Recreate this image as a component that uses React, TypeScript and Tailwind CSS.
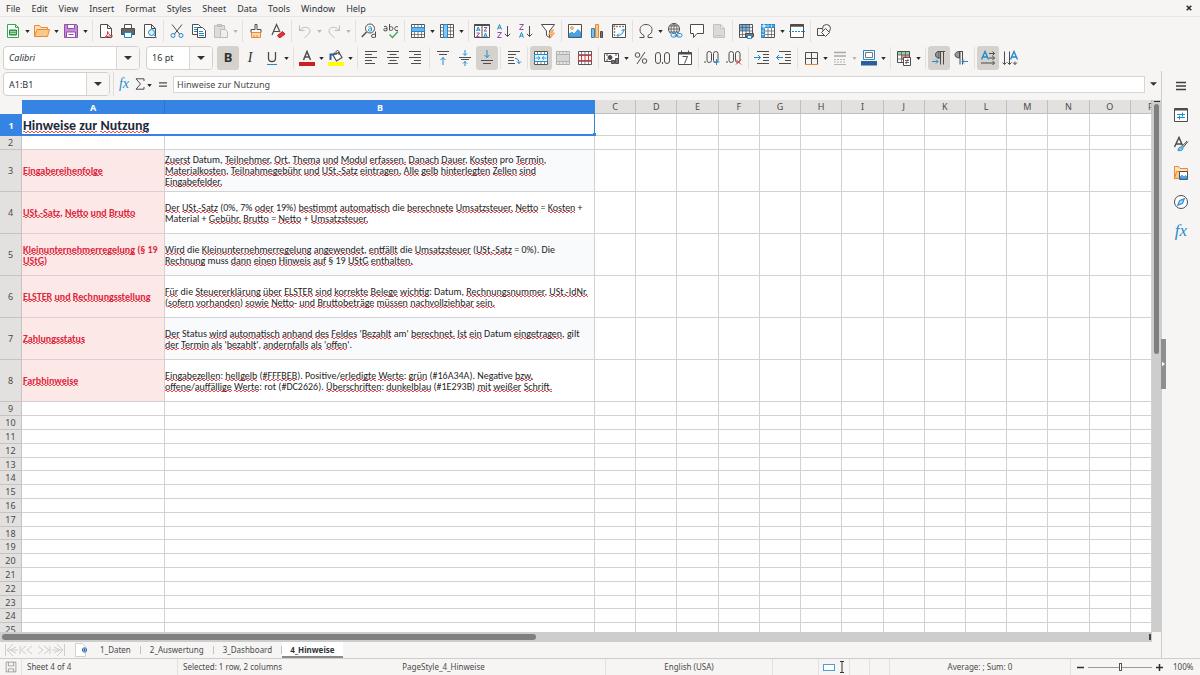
import type { ReactNode } from "react";
import clsx from "clsx";

const INK = "#4d4d4d";
const BLUE = "#1e8bcd";
const ORANGE = "#ed8733";

const menus = ["File", "Edit", "View", "Insert", "Format", "Styles", "Sheet", "Data", "Tools", "Window", "Help"];
const columns = ["C", "D", "E", "F", "G", "H", "I", "J", "K", "L", "M", "N", "O", "P"];
const tabs = ["1_Daten", "2_Auswertung", "3_Dashboard", "4_Hinweise"];

const notes = [
  {
    title: ["Eingabereihenfolge"],
    text: [
      "Zuerst Datum, Teilnehmer, Ort, Thema und Modul erfassen. Danach Dauer, Kosten pro Termin,",
      "Materialkosten, Teilnahmegebühr und USt.-Satz eintragen. Alle gelb hinterlegten Zellen sind",
      "Eingabefelder.",
    ],
  },
  {
    title: ["USt.-Satz, Netto und Brutto"],
    text: [
      "Der USt.-Satz (0%, 7% oder 19%) bestimmt automatisch die berechnete Umsatzsteuer. Netto = Kosten +",
      "Material + Gebühr. Brutto = Netto + Umsatzsteuer.",
    ],
  },
  {
    title: ["Kleinunternehmerregelung (§ 19", "UStG)"],
    text: [
      "Wird die Kleinunternehmerregelung angewendet, entfällt die Umsatzsteuer (USt.-Satz = 0%). Die",
      "Rechnung muss dann einen Hinweis auf § 19 UStG enthalten.",
    ],
  },
  {
    title: ["ELSTER und Rechnungsstellung"],
    text: [
      "Für die Steuererklärung über ELSTER sind korrekte Belege wichtig: Datum, Rechnungsnummer, USt.-IdNr.",
      "(sofern vorhanden) sowie Netto- und Bruttobeträge müssen nachvollziehbar sein.",
    ],
  },
  {
    title: ["Zahlungsstatus"],
    text: [
      "Der Status wird automatisch anhand des Feldes 'Bezahlt am' berechnet. Ist ein Datum eingetragen, gilt",
      "der Termin als 'bezahlt', andernfalls als 'offen'.",
    ],
  },
  {
    title: ["Farbhinweise"],
    text: [
      "Eingabezellen: hellgelb (#FFFBEB). Positive/erledigte Werte: grün (#16A34A). Negative bzw.",
      "offene/auffällige Werte: rot (#DC2626). Überschriften: dunkelblau (#1E293B) mit weißer Schrift.",
    ],
  },
];

const emptyRows = Array.from({ length: 17 }, (_, i) => i + 9);

// words the English dictionary accepts
const known = ["Datum", "pro", "die", "Die", "Material", "muss", "Status", "am", "Positive", "Negative", "rot", "gilt"];

function Spelled({ text }: { text: string }) {
  return (
    <>
      {text.split(/(#?[\p{L}\d]+(?:\.-\p{L}+)?\.?)/u).map((part, i) => {
        const word = part.replace(/\.$/, "");
        if (i % 2 === 0 || known.includes(word) || /\d/.test(word)) return part;
        return (
          <span
            key={i}
            className="bg-[conic-gradient(#0000_25%,#ea4a50_0_50%,#0000_0_75%,#ea4a50_0)] bg-[length:4px_2px] bg-[position:0_calc(100%-1px)] bg-repeat-x"
          >
            {part}
          </span>
        );
      })}
    </>
  );
}

function Lines({ lines }: { lines: string[] }) {
  return (
    <>
      {lines.map((line) => (
        <div key={line}>
          <Spelled text={line} />
        </div>
      ))}
    </>
  );
}

function Svg({ children, className = "size-4" }: { children: ReactNode; className?: string }) {
  return (
    <svg viewBox="0 0 16 16" className={className} fill="none" stroke={INK} strokeWidth="1" aria-hidden="true">
      {children}
    </svg>
  );
}

function Caret({ className = "text-[#2a2a2a]" }: { className?: string }) {
  return (
    <svg viewBox="0 0 6 4" className={clsx("h-[3px] w-[5px]", className)} aria-hidden="true">
      <path d="M0 0h6L3 4z" fill="currentColor" />
    </svg>
  );
}

function Tool({ label, active, children }: { label: string; active?: boolean; children: ReactNode }) {
  return (
    <button
      type="button"
      aria-label={label}
      className={clsx("flex h-6 w-[22px] shrink-0 items-center justify-center rounded-[3px]", active && "bg-[#d5d1cd]")}
    >
      {children}
    </button>
  );
}

function More({ label, off }: { label: string; off?: boolean }) {
  return (
    <button type="button" aria-label={label} className="flex h-6 w-[7px] shrink-0 items-center justify-center pt-0.5">
      <Caret className={off ? "text-[#b5b5b5]" : "text-[#2a2a2a]"} />
    </button>
  );
}

function Sep({ wide }: { wide?: boolean }) {
  return (
    <div className={clsx("flex h-[22px] shrink-0 justify-center", wide ? "w-1.5" : "w-[5px]")}>
      <div className="w-px bg-[#e3e1df]" />
    </div>
  );
}

function Doc({ stroke = INK, fill = "#fff" }: { stroke?: string; fill?: string }) {
  return <path d="M2.500 1.500h7l4 4v9h-11zM9.500 1.500v4h4" stroke={stroke} fill={fill} />;
}

// a 4 by 4 cell table, the base of every row, column and merge icon
function Lattice({ stroke = "#555", fill = "none" }: { stroke?: string; fill?: string }) {
  return (
    <>
      <path d="M1.500 1.500h13v13h-13z" stroke={stroke} fill={fill} />
      <path d="M1.500 4.500h13M1.500 8h13M1.500 11.500h13M4.500 1.500v13M8 1.500v13M11.500 1.500v13" stroke={stroke} strokeWidth=".7" />
    </>
  );
}

function AlignLines({ d }: { d: string }) {
  return (
    <Svg>
      <path d={d} />
    </Svg>
  );
}

function StandardBar() {
  return (
    <div role="toolbar" aria-label="Standard" className="flex h-[27px] items-center overflow-hidden pl-0.5">
      <Tool label="New">
        <Svg>
          <path d="M2.500 1.500h8l3 3v10h-11z" fill="#fff" stroke="#3aa655" />
          <path d="M10.500 1.500v3h3" stroke="#3aa655" />
          <path d="M4.500 7h7v5h-7z" fill="#3aa655" stroke="#2d8b45" />
          <path d="M5 8.700h6M5 10.500h6" stroke="#fff" strokeWidth=".6" />
        </Svg>
      </Tool>
      <More label="Templates" />
      <Tool label="Open">
        <Svg>
          <path d="M.5 13.500v-11h5l1.500 2h6.500v2" fill="#fde3c0" stroke={ORANGE} />
          <path d="M3 6.500h12.500l-2 7H.5z" fill="#f9c98a" stroke={ORANGE} />
        </Svg>
      </Tool>
      <More label="Recent files" />
      <Tool label="Save">
        <Svg>
          <path d="M1.500 1.500h12l1 1v12h-13z" fill="#c58cd6" stroke="#924ea8" />
          <path d="M4.500 1.500h7v4h-7zM3.500 9h9v5.500h-9z" fill="#fff" stroke="#924ea8" />
          <path d="M5.500 11.500h5" stroke="#924ea8" />
        </Svg>
      </Tool>
      <More label="Save options" />
      <Sep wide />
      <Tool label="Export as PDF">
        <Svg>
          <Doc />
          <path d="M7 14.500c2-2 3-4 2.600-6 1 3 2.800 4.500 5 4.500-3-.5-5.500.5-7.600 1.500z" stroke="#e0323c" />
        </Svg>
      </Tool>
      <Tool label="Print">
        <Svg>
          <path d="M4.500 5.500v-4h7v4" fill="#fff" />
          <path d="M1.500 5.500h13v6h-13z" fill="#666" />
          <path d="M4.500 9.500h7v5h-7z" fill="#fff" stroke={BLUE} />
        </Svg>
      </Tool>
      <Tool label="Print preview">
        <Svg>
          <Doc />
          <circle cx="9.500" cy="9.500" r="3" fill="#d7ecfa" stroke={BLUE} />
          <path d="M11.700 11.700l3 3" stroke={BLUE} />
        </Svg>
      </Tool>
      <Sep />
      <Tool label="Cut">
        <Svg>
          <path d="M3 1.500l7.500 9.500M13 1.500L5.500 11" />
          <circle cx="4" cy="12.500" r="2" stroke={BLUE} />
          <circle cx="12" cy="12.500" r="2" stroke={BLUE} />
        </Svg>
      </Tool>
      <Tool label="Copy">
        <Svg>
          <path d="M1.500 1.500h6l2 2v8h-8z" fill="#fff" />
          <path d="M3 4.500h3M3 6.500h3M3 8.500h3" stroke={BLUE} />
          <path d="M6.500 4.500h5l3 3v7h-8z" fill="#fff" />
          <path d="M8 8.500h4M8 10.500h5M8 12.500h5" stroke={BLUE} />
        </Svg>
      </Tool>
      <Tool label="Paste">
        <Svg>
          <path d="M1.500 2.500h10v12h-10z" fill="#dcdcdc" stroke="#bdbdbd" />
          <path d="M4.500 1.500h4v2h-4z" fill="#c9c9c9" stroke="#bdbdbd" />
          <path d="M7.500 6.500h5l2 2v6h-7z" fill="#eee" stroke="#bdbdbd" />
        </Svg>
      </Tool>
      <More label="Paste options" off />
      <Sep wide />
      <Tool label="Clone formatting">
        <Svg>
          <path d="M7 1.500h2v5h4v3H3v-3h4z" />
          <path d="M3.500 9.500h9v5h-9z" fill="#fbdcb4" stroke={ORANGE} />
          <path d="M6 12v2M9 12v2" stroke={ORANGE} />
        </Svg>
      </Tool>
      <Tool label="Clear direct formatting">
        <Svg>
          <path d="M2 12L6.500 1.500 10 9M3.500 8.500h5.500" strokeWidth="1.200" />
          <path d="M7.500 12.500l5-4 2.500 2.500-4.500 3.500H9z" fill="#e0323c" stroke="#c9202b" />
        </Svg>
      </Tool>
      <Sep />
      <Tool label="Undo">
        <Svg>
          <path d="M2.500 2.500v5h5M2.800 7.300C6 3 13 3.500 13 8c0 3-3 4.500-5.500 6.500" stroke="#bdbdbd" />
        </Svg>
      </Tool>
      <More label="Undo steps" off />
      <Tool label="Redo">
        <Svg>
          <path d="M13.500 2.500v5h-5M13.200 7.300C10 3 3 3.500 3 8c0 3 3 4.500 5.500 6.500" stroke="#bdbdbd" />
        </Svg>
      </Tool>
      <More label="Redo steps" off />
      <Sep wide />
      <Tool label="Find and replace">
        <Svg>
          <circle cx="9" cy="5.500" r="4.500" fill="#fff" />
          <path d="M5.500 9L.8 14" strokeWidth="1.400" />
          <path d="M7.300 4.200c1.200-1 3.200-.6 3.200 1v2.500c-1.200.7-3.200.6-3.200-.7s1.700-1.300 3.200-1.200" stroke={BLUE} />
          <path d="M14.500 8.500v6M14.500 12c-1-1.300-4-1-4 1 0 2 3 2 4 .5" />
        </Svg>
      </Tool>
      <Tool label="Spelling">
        <Svg>
          <path d="M1 3.700c1.300-.8 3-.5 3 .9V7.500c-1.200.7-3.300.6-3.300-.8 0-1 1.300-1.300 3.300-1.200M6.500 1v6.500M6.500 4.500c1-1.300 3.500-1 3.500 1s-2.500 2.500-3.500 1M15 4c-1.200-.9-3.300-.4-3.300 1.600S13.800 8 15 7.200" />
          <path d="M6.500 11.500l3 3 5.500-6" stroke="#3aa655" strokeWidth="1.300" />
        </Svg>
      </Tool>
      <Sep />
      <Tool label="Row">
        <Svg>
          <Lattice fill="#fff" />
          <path d="M1.500 4.500h13v4h-13z" fill="#6cb2ec" stroke={BLUE} />
        </Svg>
      </Tool>
      <More label="Row options" />
      <Tool label="Column">
        <Svg>
          <Lattice fill="#fff" />
          <path d="M4.500 1.500h4v13h-4z" fill="#8cc4f0" stroke={BLUE} />
        </Svg>
      </Tool>
      <More label="Column options" />
      <Sep wide />
      <Tool label="Sort">
        <Svg>
          <path d="M.5 1.500h15v13H.5zM8 1.500v13" fill="#fff" />
          <path d="M.5 2h15" strokeWidth="2" />
          <path d="M2.500 8l1.700-4L6 8M3 7h2.500M9.800 14l1.700-4 1.700 4M10.300 13h2.500" stroke={BLUE} />
          <path d="M2.500 10h3l-3 3.700h3M10 4.500h3L10 8h3" stroke="#924ea8" />
        </Svg>
      </Tool>
      <Tool label="Sort ascending">
        <Svg>
          <path d="M1.500 6.500l2-5 2 5M2 5h3" stroke={BLUE} />
          <path d="M1.500 9.500h4l-4 5h4" stroke="#924ea8" />
          <path d="M11.500 3v10.500M8.800 10.800l2.700 2.700 2.700-2.700" />
        </Svg>
      </Tool>
      <Tool label="Sort descending">
        <Svg>
          <path d="M1.500 1.500h4l-4 5h4" stroke="#924ea8" />
          <path d="M1.500 14.500l2-5 2 5M2 13h3" stroke={BLUE} />
          <path d="M11.500 3v10.500M8.800 10.800l2.700 2.700 2.700-2.700" />
        </Svg>
      </Tool>
      <Tool label="AutoFilter">
        <Svg>
          <path d="M1.500 1.500h13L9.500 8v6.500l-3-2V8z" fill="#fff" />
          <path d="M11.500 7l-3 4.500h3l-1.500 4 4.500-5.500h-3l2-3z" fill="#f9c98a" stroke={ORANGE} strokeWidth=".7" />
        </Svg>
      </Tool>
      <Sep />
      <Tool label="Insert image">
        <Svg>
          <path d="M1.500 1.500h13v13h-13z" fill="#fff" />
          <circle cx="5" cy="5" r="1.500" fill="#f9c98a" stroke={ORANGE} strokeWidth=".7" />
          <path d="M2 14v-3l3-2 2 2 4-4.500 3 3V14z" fill="#4fa3e0" stroke={BLUE} strokeWidth=".7" />
        </Svg>
      </Tool>
      <Tool label="Insert chart">
        <Svg>
          <path d="M2.500 5.500h3v9h-3z" fill="#83beec" stroke={BLUE} />
          <path d="M6.500 1.500h3v13h-3z" fill="#f9c98a" stroke={ORANGE} />
          <path d="M11.500 8.500h2v6h-2z" fill="#777" />
        </Svg>
      </Tool>
      <Tool label="Insert pivot table">
        <Svg>
          <path d="M1.500 1.500h13v13h-13z" fill="#fff" />
          <path d="M2 3.500h12M3.500 2v12" strokeDasharray="2 1" strokeWidth="1.500" stroke="#8a8a8a" />
          <path d="M6 12.500c4 0 6.500-2 6.500-6M8 10.500l-2 2 2 2M10.500 8l2-2 2 2" stroke={BLUE} />
        </Svg>
      </Tool>
      <Sep />
      <Tool label="Special character">
        <Svg>
          <path d="M1.500 14.500H6v-2C3 11 2 9 2 6.800 2 3.500 4.700 1.500 8 1.500s6 2 6 5.300c0 2.200-1 4.200-4 5.700v2h4.500" />
        </Svg>
      </Tool>
      <More label="Characters" />
      <Tool label="Hyperlink">
        <Svg>
          <circle cx="7" cy="6" r="5.500" />
          <path d="M7 .5v11M1.500 6h11M2.500 3h9M2.500 9h9M7 .5c-4 3-4 8 0 11M7 .5c4 3 4 8 0 11" strokeWidth=".8" />
          <path d="M4 10h11v5H4z" fill="#f6f5f4" stroke="none" />
          <rect x="4" y="10.500" width="5.500" height="3.500" rx="1.700" stroke={BLUE} />
          <rect x="9.500" y="10.500" width="5.500" height="3.500" rx="1.700" stroke={BLUE} />
          <path d="M7.500 12.300h4" stroke={BLUE} />
        </Svg>
      </Tool>
      <Tool label="Comment">
        <Svg>
          <path d="M1.500 1.500h13v9H8l-3.500 4v-4h-3z" fill="#fff" />
        </Svg>
      </Tool>
      <Tool label="Headers and footers">
        <Svg>
          <Doc stroke="#c2c2c2" fill="#dadada" />
          <path d="M4.500 12.500h7" stroke="#c2c2c2" />
        </Svg>
      </Tool>
      <Sep />
      <Tool label="Print area">
        <Svg>
          <path d="M1 1.500h10.500V8H1z" fill="#6cb2ec" stroke="none" />
          <Lattice />
          <path d="M7.500 10.500h8v3h-8z" fill="#777" />
          <path d="M9.500 12.500h4v3h-4z" fill="#fff" stroke={BLUE} />
        </Svg>
      </Tool>
      <Tool label="Freeze rows and columns">
        <Svg>
          <Lattice fill="#fff" />
          <path d="M1.500 1.500h13v3h-10v10h-3z" fill="#4fa3e0" stroke={BLUE} />
          <path d="M8 1.500v3M11.500 1.500v3M1.500 8h3M1.500 11.500h3" stroke="#fff" strokeWidth=".6" />
          <path d="M4 .5v5M1.500 3h5" stroke="#fff" />
        </Svg>
      </Tool>
      <More label="Freeze options" />
      <Tool label="Split window">
        <Svg>
          <path d="M1.500 1.500h13v13h-13z" fill="#fff" />
          <path d="M1.500 2.500h13" strokeWidth="2.500" />
          <path d="M0 8.500h16" stroke={BLUE} strokeDasharray="2 1" />
        </Svg>
      </Tool>
      <Sep />
      <Tool label="Show draw functions">
        <Svg>
          <path d="M1.500 5.500h8v7h-8z" />
          <circle cx="10.500" cy="5.500" r="4" fill="#f6f5f4" />
          <path d="M5.500 9.500l4-4 4 4-4 4z" fill="#f6f5f4" />
        </Svg>
      </Tool>
    </div>
  );
}

function Combo({ label, value, italic, wide }: { label: string; value: string; italic?: boolean; wide: string }) {
  return (
    <div className={clsx("flex h-6 shrink-0 overflow-hidden rounded-[4px] border border-[#d3cfcb] bg-white", wide)}>
      <input
        aria-label={label}
        defaultValue={value}
        className={clsx("min-w-0 flex-1 bg-transparent pl-[5px] outline-none", italic && "italic")}
      />
      <button
        type="button"
        aria-label={label + " list"}
        className="flex w-[23px] items-center justify-center border-l border-[#d9d6d3] bg-[#f8f7f6]"
      >
        <svg viewBox="0 0 8 4" className="h-1 w-2" aria-hidden="true">
          <path d="M0 0h8L4 4z" fill="#2e3436" />
        </svg>
      </button>
    </div>
  );
}

function FormattingBar() {
  return (
    <div role="toolbar" aria-label="Formatting" className="flex h-[27px] items-center overflow-hidden pl-[3px]">
      <Combo label="Font name" value="Calibri" italic wide="w-[137px]" />
      <div className="w-1.5 shrink-0" />
      <Combo label="Font size" value="16 pt" wide="w-[67px]" />
      <div className="w-1 shrink-0" />
      <Tool label="Bold" active>
        <span className="text-[13px] leading-none font-bold">B</span>
      </Tool>
      <Tool label="Italic">
        <span className="font-['Liberation_Serif',serif] text-[14px] leading-none italic">I</span>
      </Tool>
      <Tool label="Underline">
        <Svg>
          <path d="M4.500 2v6.500c0 4 7 4 7 0V2" strokeWidth="1.300" />
          <path d="M3 14.500h10" stroke={BLUE} />
        </Svg>
      </Tool>
      <More label="Underline style" />
      <Sep wide />
      <Tool label="Font color">
        <Svg>
          <path d="M4.500 10L8 1.500 11.500 10M5.800 7h4.500" strokeWidth="1.500" />
          <path d="M0 12h16v4H0z" fill="#c9211e" stroke="none" />
        </Svg>
      </Tool>
      <More label="Font colors" />
      <Tool label="Highlighting">
        <Svg>
          <path d="M5 5l6-2.500 3 5L8.500 11z" fill="#fff" strokeWidth="1.200" />
          <path d="M8 5V2c0-2 3-2 3 0v3" />
          <path d="M2.500 10V4.500h3L7 3" stroke="#2a6099" strokeWidth="2" />
          <path d="M0 12h16v4H0z" fill="#ff0" stroke="none" />
        </Svg>
      </Tool>
      <More label="Highlight colors" />
      <Sep wide />
      <Tool label="Align left">
        <AlignLines d="M2 1.500h12M2 4.500h7M2 7.500h12M2 10.500h7M2 13.500h10" />
      </Tool>
      <Tool label="Center horizontally">
        <AlignLines d="M2 1.500h12M4.500 4.500h7M2 7.500h12M4.500 10.500h7M3 13.500h10" />
      </Tool>
      <Tool label="Align right">
        <AlignLines d="M2 1.500h12M7 4.500h7M2 7.500h12M7 10.500h7M4 13.500h10" />
      </Tool>
      <Sep wide />
      <Tool label="Align top">
        <Svg>
          <path d="M2 1.500h12M4 4.500h8" />
          <path d="M8 15V7.500M5.500 10L8 7.500l2.500 2.500" stroke={BLUE} />
        </Svg>
      </Tool>
      <Tool label="Center vertically">
        <Svg>
          <path d="M2 7.500h12M4 9.500h8" />
          <path d="M8 0v5M6 3.500l2 2 2-2M8 16v-4.500M6 13.500l2-2 2 2" stroke={BLUE} />
        </Svg>
      </Tool>
      <Tool label="Align bottom" active>
        <Svg>
          <path d="M2 10.500h12M4 13.500h8" />
          <path d="M8 0v7.500M5.500 5L8 7.500 10.500 5" stroke={BLUE} />
        </Svg>
      </Tool>
      <Sep />
      <Tool label="Wrap text">
        <Svg>
          <path d="M2 1.500h12M2 4.500h8M2 7.500h6M2 10.500h6M2 13.500h7" />
          <path d="M9 8.500c3 0 4 1.500 4 5M11 11.500l2 2 2-2" stroke={BLUE} />
        </Svg>
      </Tool>
      <Sep />
      <Tool label="Merge and center" active>
        <Svg>
          <Lattice fill="#fff" />
          <path d="M1.500 4.500h13v7h-13z" fill="#e8f4fd" stroke={BLUE} />
          <path d="M2.500 8H7M9 8h4.500M5 6.200L7 8 5 9.800M11 6.200L9 8l2 1.800" stroke={BLUE} strokeWidth=".8" />
        </Svg>
      </Tool>
      <Tool label="Merge cells">
        <Svg>
          <Lattice stroke="#b0b0b0" fill="#e4e4e4" />
          <path d="M1.500 4.500h13v7h-13z" fill="#d6d6d6" stroke="#b0b0b0" />
        </Svg>
      </Tool>
      <Tool label="Unmerge cells">
        <Svg>
          <Lattice fill="#fff" />
          <path d="M1.500 5.500h13v5h-13zM4.500 5.500v5M8 5.500v5M11.500 5.500v5" fill="#fff" stroke="#e0323c" />
        </Svg>
      </Tool>
      <Sep />
      <Tool label="Format as currency">
        <Svg>
          <path d="M.5 3.500h14v8H.5z" fill="#fff" />
          <circle cx="6" cy="7.500" r="2" fill={INK} />
          <path d="M2 5h2M11 5h2M2 10h2" />
          <path d="M7.500 10.500h3v3h-3zM11.500 8.500h3v5h-3z" fill="#777" />
        </Svg>
      </Tool>
      <More label="Currencies" />
      <Tool label="Format as percent">
        <Svg>
          <circle cx="4.500" cy="5" r="2.300" />
          <circle cx="11.500" cy="11" r="2.300" />
          <path d="M12 2L4 14" />
        </Svg>
      </Tool>
      <Tool label="Format as number">
        <Svg>
          <rect x=".5" y="2.500" width="5" height="11" rx="2.500" />
          <rect x="9.500" y="2.500" width="5" height="11" rx="2.500" />
          <path d="M7.500 12v2" />
        </Svg>
      </Tool>
      <Tool label="Format as date">
        <Svg>
          <path d="M1.500 2.500h13v12h-13z" fill="#fff" />
          <path d="M1.500 3.500h13" strokeWidth="2" />
          <path d="M4.500 .5v3M11.500 .5v3M5.500 6.500h5l-3 7" />
        </Svg>
      </Tool>
      <Sep />
      <Tool label="Add decimal place">
        <Svg>
          <rect x="3" y="1.500" width="4.500" height="11" rx="2.200" />
          <rect x="9.500" y="1.500" width="4.500" height="11" rx="2.200" />
          <path d="M1 11v2" />
          <path d="M12.500 9v6M9.500 12h6" stroke={BLUE} />
        </Svg>
      </Tool>
      <Tool label="Delete decimal place">
        <Svg>
          <rect x="3" y="1.500" width="4.500" height="11" rx="2.200" />
          <rect x="9.500" y="1.500" width="4.500" height="11" rx="2.200" />
          <path d="M1 11v2" />
          <path d="M10 9.500l5 5M15 9.500l-5 5" stroke="#e0323c" />
        </Svg>
      </Tool>
      <Sep wide />
      <Tool label="Increase indent">
        <Svg>
          <path d="M3 1.500h12M9 4.500h6M9 7.500h6M9 10.500h6M3 13.500h12" />
          <path d="M0 7.500h6.500M4 5l2.500 2.500L4 10" stroke={BLUE} />
        </Svg>
      </Tool>
      <Tool label="Decrease indent">
        <Svg>
          <path d="M3 1.500h12M9 4.500h6M9 7.500h6M9 10.500h6M3 13.500h12" />
          <path d="M.5 7.500H7M3 5L.5 7.500 3 10" stroke={BLUE} />
        </Svg>
      </Tool>
      <Sep />
      <Tool label="Borders">
        <Svg>
          <path d="M2.500 14V2.500h12V14M8.500 2.500v12M2.500 8.500h12" />
          <path d="M2 14.500h13" stroke={ORANGE} />
        </Svg>
      </Tool>
      <More label="Border options" />
      <Tool label="Border style">
        <Svg>
          <path d="M2 2.500h12M2 6h12" stroke="#a8a8a8" strokeWidth="1.500" />
          <path d="M2 9.500h12M2 12h12" stroke="#b5b5b5" strokeDasharray="2 1" />
          <path d="M2 14.500h12" stroke="#b5b5b5" />
        </Svg>
      </Tool>
      <More label="Border styles" off />
      <Tool label="Border color">
        <Svg>
          <path d="M2.500 .500h11v9h-11z" fill="#fff" stroke={BLUE} />
          <path d="M4.500 2.500h7v5h-7z" stroke="#777" />
          <path d="M0 11h16v4.500H0z" fill="#2a6099" stroke="none" />
        </Svg>
      </Tool>
      <More label="Border colors" />
      <Sep wide />
      <Tool label="Conditional formatting">
        <Svg>
          <path d="M1.500 1.500h12v11h-12z" fill="#fff" stroke="none" />
          <path d="M1.500 1.500h12v3.500h-12z" fill="#8ed59f" stroke="none" />
          <path d="M5.500 5h8v5h-8z" fill="#f58f8f" stroke="none" />
          <path d="M1.500 1.500h12v11h-12z" />
          <path d="M1.500 5h12M1.500 9h12M5.500 1.500v11M9.500 1.500v11" strokeWidth=".7" />
          <path d="M7.500 7.500h7v8h-7z" fill="#fff" />
          <path d="M9 10.500h4M9 12.500h4M12 9l-2 5" strokeWidth=".8" />
        </Svg>
      </Tool>
      <More label="Conditions" />
      <Sep wide />
      <Tool label="Left-to-right" active>
        <Svg>
          <path d="M14 1.500H8C3.500 1.500 3.500 8 8 8h1.500M9.500 1.500v13M12.500 1.500v13" />
          <path d="M8 1.500C3.500 1.500 3.500 8 8 8z" fill="#999" />
          <path d="M1 11.500h6M5 9.500l2 2-2 2" stroke={BLUE} />
        </Svg>
      </Tool>
      <Tool label="Right-to-left">
        <Svg>
          <path d="M10 1.500H6M7 1.500v13M9.500 1.500v13" />
          <path d="M6.500 1.500C.5 1.500.5 8 6.500 8z" fill="#999" />
          <path d="M15 11.500H9M11 9.500l-2 2 2 2" stroke={BLUE} />
        </Svg>
      </Tool>
      <Sep />
      <Tool label="Text direction from left to right" active>
        <Svg>
          <path d="M1.500 9.500l3.500-8 3.500 8M3 7h4.500" stroke={BLUE} strokeWidth="1.400" />
          <path d="M9 3.500h5.500M9 8h5.500M1 13h13.500M12.500 1.500l2 2-2 2M12.500 6l2 2-2 2M12.500 11l2 2-2 2" />
        </Svg>
      </Tool>
      <Tool label="Text direction from top to bottom">
        <Svg>
          <path d="M8.500 9.500L12 1.500l3.500 8M10 7h4.500" stroke={BLUE} strokeWidth="1.400" />
          <path d="M2.500 1.500v13M7.500 1.500v13M13 11.500v3M.5 12.500l2 2 2-2M5.500 12.500l2 2 2-2M11 12.500l2 2 2-2" />
        </Svg>
      </Tool>
    </div>
  );
}

function FormulaBar() {
  return (
    <div className="flex h-7 shrink-0 items-start pt-px pl-[3px]">
      <Combo label="Name box" value="A1:B1" wide="w-[107px]" />
      <div className="ml-[3px] h-6 w-px bg-[#e0dedc]" />
      <button type="button" aria-label="Function wizard" className="flex h-6 w-5 items-center justify-center">
        <span className="font-['Liberation_Serif',serif] text-[14px] leading-none text-[#1e8bcd] italic">fx</span>
      </button>
      <button type="button" aria-label="Select function" className="flex h-6 w-3 items-center justify-center">
        <svg viewBox="0 0 10 12" className="h-3 w-2.5" fill="none" stroke={INK} aria-hidden="true">
          <path d="M9 3V.8H1L5.500 6 1 11.200h8V9" />
        </svg>
      </button>
      <More label="Functions" />
      <button type="button" aria-label="Formula" className="flex h-6 w-5 items-center justify-center">
        <svg viewBox="0 0 8 5" className="h-[5px] w-2" stroke={INK} strokeWidth="1.300" aria-hidden="true">
          <path d="M0 .8h8M0 4.200h8" />
        </svg>
      </button>
      <input
        aria-label="Input line"
        defaultValue="Hinweise zur Nutzung"
        className="mt-1 h-[17px] min-w-0 flex-1 border border-[#d8d6d4] bg-white pl-[3px] text-[#4a4a4a] outline-none"
      />
      <button type="button" aria-label="Expand formula bar" className="flex h-6 w-4 items-center justify-center">
        <svg viewBox="0 0 8 4" className="h-1 w-[7px]" aria-hidden="true">
          <path d="M0 0h8L4 4z" fill="#2e3436" />
        </svg>
      </button>
    </div>
  );
}

const cell = "border-r border-b border-[#d2d2d2] p-0";
const rowHead = "border-r border-b border-[#c4c4c4] bg-[#e2e1df] p-0 text-center font-normal text-[#4a4a4a]";

function EmptyCells() {
  return (
    <>
      {columns.map((c) => (
        <td key={c} className={cell} />
      ))}
    </>
  );
}

function Sheet() {
  return (
    <table className="w-full table-fixed border-separate border-spacing-0 bg-white leading-[11px]">
      <colgroup>
        <col className="w-[22px]" />
        <col className="w-[143px]" />
        <col className="w-[430px]" />
        {columns.map((c) => (
          <col key={c} className={c === "P" ? "w-[21px]" : undefined} />
        ))}
      </colgroup>
      <thead>
        <tr className="h-3.5">
          <th className="bg-[#f6f5f4] p-0" />
          <th className="border-r border-[#2f74c8] bg-[#3584e4] p-0 font-bold text-white">A</th>
          <th className="bg-[#3584e4] p-0 font-bold text-white">B</th>
          {columns.map((c) => (
            <th
              key={c}
              className={clsx(
                "overflow-hidden border-r border-b border-[#bfbfbf] bg-[#e2e1df] p-0 font-normal text-[#4a4a4a]",
                c === "P" && "pl-[17px] text-left",
              )}
            >
              {c}
            </th>
          ))}
        </tr>
      </thead>
      <tbody>
        <tr className="h-[22px]">
          <th className="bg-[#3584e4] p-0 font-bold text-white">1</th>
          <td
            colSpan={2}
            className="relative border-r border-b-2 border-[#3584e4] p-0 pt-1 pl-px font-['Carlito','Lato',sans-serif] text-[14px] leading-4 font-bold whitespace-nowrap text-[#1e293b]"
          >
            <Spelled text="Hinweise zur Nutzung" />
            <span className="absolute -right-0.5 -bottom-0.5 size-[3px] bg-[#3584e4]" />
          </td>
          <EmptyCells />
        </tr>
        <tr className="h-3.5">
          <th className={rowHead}>2</th>
          <td className={cell} />
          <td className={cell} />
          <EmptyCells />
        </tr>
        {notes.map((note, i) => (
          <tr key={note.title[0]} className="h-[42px] font-['Carlito','Lato',sans-serif] text-[10px]">
            <th className={clsx(rowHead, "font-['Noto_Sans',sans-serif] text-[9px]")}>{i + 3}</th>
            <td className="border-r border-b border-[#dccfd1] bg-[#fde8e8] p-0 pl-px font-bold whitespace-nowrap text-[#dc2640]">
              <Lines lines={note.title} />
            </td>
            <td className={clsx(cell, "whitespace-nowrap text-[#1f1f1f]", i % 2 === 0 && "bg-[#f8fafc]")}>
              <Lines lines={note.text} />
            </td>
            <EmptyCells />
          </tr>
        ))}
        {emptyRows.map((n) => (
          <tr key={n} className={n % 5 === 3 ? "h-[13px]" : "h-3.5"}>
            <th className={rowHead}>{n}</th>
            <td className={cell} />
            <td className={cell} />
            <EmptyCells />
          </tr>
        ))}
      </tbody>
    </table>
  );
}

function SheetTabs() {
  return (
    <div className="flex h-4 shrink-0 items-stretch text-[8px]">
      <div className="flex w-[70px] items-center justify-center">
        <svg viewBox="0 0 62 14" className="h-3.5 w-[62px]" fill="none" stroke="#cfcdcb" aria-hidden="true">
          <path d="M1.500 1v12M9 1L3 7l6 6M12 4L6 7l6 3M4 7h10M16 3v8M22 3l-5 4 5 4M28 3l-5 4 5 4M34 3l5 4-5 4M40 3l5 4-5 4M46 3v8M53 1l6 6-6 6M48 7h10M50 4l6 3-6 3M60.500 1v12" />
        </svg>
      </div>
      <button type="button" aria-label="Add sheet" className="flex w-[21px] items-center justify-center">
        <svg viewBox="0 0 14 14" className="size-3.5" fill="none" aria-hidden="true">
          <path d="M1.500.5h7l3 3v10h-10z" fill="#fff" stroke="#d3d1cf" />
          <circle cx="10.500" cy="7" r="2.200" fill="#fff" stroke="#2a6fb5" />
          <path d="M10.500 5.500v3M9 7h3" stroke="#2a6fb5" />
        </svg>
      </button>
      {tabs.map((tab, i) => {
        const current = i === tabs.length - 1;
        return (
          <div key={tab} className="flex items-center">
            {i > 0 && <div className="h-2 w-px bg-[#c4c2c0]" />}
            <button
              type="button"
              className={clsx(
                "h-full",
                current ? "border-b-2 border-[#8a8a8a] bg-white px-2 pt-0.5 font-bold" : "px-[9px] text-[#4a4a4a]",
              )}
            >
              {tab}
            </button>
          </div>
        );
      })}
    </div>
  );
}

function SideButton({ label, children }: { label: string; children: ReactNode }) {
  return (
    <button type="button" aria-label={label} className="flex h-[29px] w-6 shrink-0 items-center justify-center">
      {children}
    </button>
  );
}

function Sidebar() {
  return (
    <aside className="relative flex w-[39px] shrink-0 flex-col items-center border-l border-[#cfcdcb]">
      <SideButton label="Sidebar settings">
        <svg viewBox="0 0 10 10" className="size-2.5" stroke="#3d3d3d" strokeWidth="1.500" aria-hidden="true">
          <path d="M0 1.500h10M0 5h10M0 8.500h10" />
        </svg>
      </SideButton>
      <SideButton label="Properties">
        <Svg>
          <path d="M1.500 1.500h13v13h-13z" fill="#fff" />
          <path d="M1.500 2.500h13" strokeWidth="2" />
          <path d="M4 7.500h8M4 10.500h8M9.500 5.500v4M6.500 8.500v4" stroke={BLUE} />
        </Svg>
      </SideButton>
      <SideButton label="Styles">
        <Svg>
          <path d="M1.500 11L6 1.500l3.500 8M3 8h5.500" strokeWidth="1.500" />
          <path d="M15 5.500l-5 6M14 5l-5 5.500" />
          <path d="M5 14.500c0-3 2.500-4.500 5-3 0 3-2.500 3.500-5 3z" fill="#83beec" stroke={BLUE} />
        </Svg>
      </SideButton>
      <SideButton label="Gallery">
        <Svg>
          <path d="M1.500 13.500v-12h4l1.500 2h7.500v3H4z" fill="#fde3c0" stroke={ORANGE} />
          <path d="M1.500 13.500l2-7h3v7z" fill="#f9c98a" stroke={ORANGE} />
          <path d="M6.500 6.500h8v8h-8z" fill="#fff" />
          <path d="M7 14v-2l2-2 2 2 1.500-1.500L14 12v2z" fill="#4fa3e0" stroke={BLUE} strokeWidth=".6" />
        </Svg>
      </SideButton>
      <SideButton label="Navigator">
        <Svg>
          <circle cx="8" cy="8" r="6.500" fill="#fff" />
          <path d="M11.500 4.500L9.500 9.500 4.500 11.500 6.500 6.500z" fill="#83beec" stroke={BLUE} />
          <circle cx="8" cy="8" r=".8" fill="#fff" stroke="none" />
        </Svg>
      </SideButton>
      <SideButton label="Functions">
        <span className="font-['Liberation_Serif',serif] text-[17px] leading-4 text-[#1e8bcd] italic">fx</span>
      </SideButton>
      <button
        type="button"
        aria-label="Hide sidebar"
        className="absolute top-[268px] -left-px flex h-[50px] w-[5px] items-center justify-center bg-[#8f8f8f]"
      >
        <svg viewBox="0 0 4 6" className="h-1.5 w-[3px]" aria-hidden="true">
          <path d="M0 0l4 3-4 3z" fill="#fff" />
        </svg>
      </button>
    </aside>
  );
}

const part = "flex shrink-0 items-center border-r border-[#e3e1df]";

function StatusBar() {
  return (
    <footer className="flex h-[17px] shrink-0 items-stretch border-t border-[#cfcdcb] text-[8px] text-[#4a4a4a]">
      <div className={clsx(part, "w-[22px] justify-center")}>
        <Svg className="size-3">
          <path d="M1.500 1.500h13v13h-13zM4.500 1.500v5h7v-5M4.500 14.500v-4h7v4" stroke="#8a8a8a" />
        </Svg>
      </div>
      <div className={clsx(part, "w-[156px] pl-[5px]")}>Sheet 4 of 4</div>
      <div className="flex w-[104px] shrink-0 items-center pl-[5px] whitespace-nowrap">Selected: 1 row, 2 columns</div>
      <div className={clsx(part, "w-[324px] justify-center")}>PageStyle_4_Hinweise</div>
      <div className={clsx(part, "w-[167px] justify-center")}>English (USA)</div>
      <div className={clsx(part, "w-[46px]")} />
      <div className={clsx(part, "w-[31px] justify-end gap-1 pr-1")}>
        <span className="h-[7px] w-3 border border-[#4a9fd4] bg-white" />
        <svg viewBox="0 0 6 12" className="h-3 w-1.5" fill="none" stroke="#333" aria-hidden="true">
          <path d="M1 .5h4M3 .5v11M1 11.500h4" />
        </svg>
      </div>
      <div className={clsx(part, "w-5")} />
      <div className={clsx(part, "w-5")} />
      <div className="flex min-w-0 flex-1 items-center justify-center border-r border-[#e3e1df]">Average: ; Sum: 0</div>
      <div className="flex w-[129px] shrink-0 items-center pl-1.5">
        <button type="button" aria-label="Zoom out">
          <svg viewBox="0 0 8 8" className="size-[7px]" aria-hidden="true">
            <path d="M0 4h8" stroke="#2e2e2e" strokeWidth="1.700" />
          </svg>
        </button>
        <input
          type="range"
          aria-label="Zoom"
          defaultValue={50}
          className="mx-1 h-2 w-16 appearance-none bg-[linear-gradient(#9a9a9a,#9a9a9a)] bg-[length:100%_1px] bg-center bg-no-repeat [&::-webkit-slider-thumb]:h-2 [&::-webkit-slider-thumb]:w-[3px] [&::-webkit-slider-thumb]:appearance-none [&::-webkit-slider-thumb]:border [&::-webkit-slider-thumb]:border-[#555] [&::-webkit-slider-thumb]:bg-white"
        />
        <button type="button" aria-label="Zoom in">
          <svg viewBox="0 0 8 8" className="size-[7px]" aria-hidden="true">
            <path d="M4 0v8M0 4h8" stroke="#2e2e2e" strokeWidth="1.700" />
          </svg>
        </button>
        <span className="ml-2.5">100%</span>
      </div>
    </footer>
  );
}

export default function App() {
  return (
    <div className="flex h-screen flex-col overflow-hidden bg-[#f6f5f4] font-['Noto_Sans',sans-serif] text-[9px] leading-none text-[#2e3436]">
      <header className="shrink-0">
        <nav className="flex h-[17px] items-center gap-[11px] border-b border-[#e9e7e5] pl-1.5">
          {menus.map((menu) => (
            <button key={menu} type="button">
              {menu}
            </button>
          ))}
          <button type="button" aria-label="Close document" className="mr-2 ml-auto">
            <svg viewBox="0 0 8 8" className="size-1.5" aria-hidden="true">
              <path d="M1 1l6 6M7 1L1 7" stroke="#2e2e2e" strokeWidth="2.200" />
            </svg>
          </button>
        </nav>
        <StandardBar />
        <FormattingBar />
      </header>
      <div className="flex min-h-0 flex-1">
        <main className="flex min-w-0 flex-1 flex-col">
          <FormulaBar />
          <div className="flex min-h-0 flex-1 pt-px">
            <div className="min-w-0 flex-1 overflow-hidden bg-white">
              <Sheet />
            </div>
            <div className="flex w-[9px] shrink-0 flex-col items-center bg-[#cdcdcd]">
              <div className="mt-px h-px w-1.5 bg-[#2e2e2e]" />
              <div className="mt-0.5 h-[47%] w-[5px] rounded-full bg-[#7f7f7f]" />
            </div>
          </div>
          <div className="mr-[9px] flex h-2.5 shrink-0 items-center justify-between bg-[#cdcdcd] pr-px pl-0.5">
            <div className="h-1.5 w-[46.5%] rounded-full bg-[#7f7f7f]" />
            <div className="h-1.5 w-0.5 bg-[#444]" />
          </div>
          <SheetTabs />
        </main>
        <Sidebar />
      </div>
      <StatusBar />
    </div>
  );
}
